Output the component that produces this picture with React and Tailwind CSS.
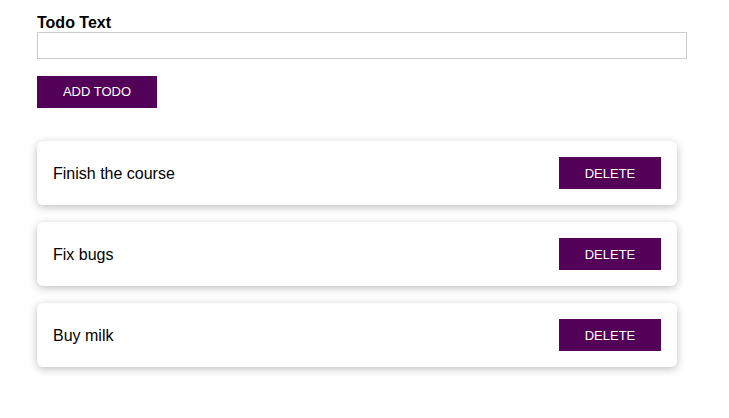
import { useState } from "react";

function TodoItem({ text, onDelete }) {
  return (
    <li className="flex items-center justify-between w-[640px] h-16 px-4 bg-white rounded-md shadow-[0_2px_8px_rgba(0,0,0,0.26)]">
      <span className="text-base text-black pt-[2px]">{text}</span>
      <button
        onClick={onDelete}
        className="w-[102px] h-8 bg-[#520058] text-white text-[13px] pt-[1px]"
      >
        DELETE
      </button>
    </li>
  );
}

function App() {
  const [todos, setTodos] = useState([
    { id: 1, text: "Finish the course" },
    { id: 2, text: "Fix bugs" },
    { id: 3, text: "Buy milk" },
  ]);
  const [text, setText] = useState("");

  const addTodo = (e) => {
    e.preventDefault();
    if (!text.trim()) return;
    setTodos([...todos, { id: Date.now(), text }]);
    setText("");
  };

  return (
    <div className="min-h-screen bg-white font-['Liberation_Sans',Arial,sans-serif] pl-[37px] pt-[14px]">
      <form onSubmit={addTodo} className="w-[650px]">
        <label htmlFor="todo" className="block text-base font-bold text-black leading-[18px]">
          Todo Text
        </label>
        <input
          id="todo"
          value={text}
          onChange={(e) => setText(e.target.value)}
          className="block w-[650px] h-[27px] border border-[#ccc] px-1 outline-none"
        />
        <button
          type="submit"
          className="mt-[17px] w-[120px] h-8 bg-[#520058] text-white text-[13px]"
        >
          ADD TODO
        </button>
      </form>
      <ul className="mt-[33px] flex flex-col gap-[17px]">
        {todos.map((t) => (
          <TodoItem
            key={t.id}
            text={t.text}
            onDelete={() => setTodos(todos.filter((x) => x.id !== t.id))}
          />
        ))}
      </ul>
    </div>
  );
}

export default App;
